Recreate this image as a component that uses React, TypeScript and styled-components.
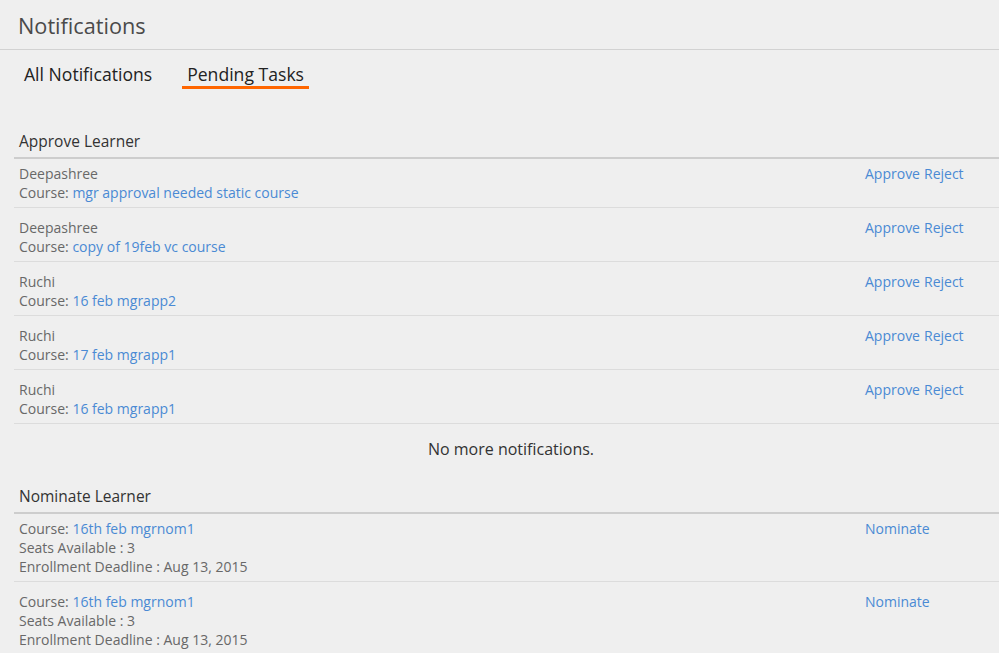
import React from "react";
import styled, { createGlobalStyle } from "styled-components";

const Global = createGlobalStyle`
  html, body { margin: 0; padding: 0; background: #efefef; }
  body { font-family: "Open Sans", "Liberation Sans", sans-serif; color: #333; }
  * { box-sizing: border-box; }
`;

const Page = styled.div`
  width: 999px;
  min-height: 653px;
  background: #efefef;
  overflow: hidden;
`;

const Header = styled.header`
  height: 50px;
  border-bottom: 1px solid #d2d2d2;
  padding: 12px 18px 0;
`;

const Title = styled.h1`
  margin: 0;
  font-size: 21.7px;
  font-weight: 400;
  line-height: 28px;
  color: #4a4a4a;
`;

const Tabs = styled.nav`
  display: flex;
  gap: 25px;
  padding: 13px 0 0 19px;
`;

const Tab = styled.div<{ $active?: boolean }>`
  padding: 0 5px;
  font-size: 17.6px;
  line-height: 23px;
  color: #222;
  border-bottom: 3px solid ${(p) => (p.$active ? "#ff6600" : "transparent")};
`;

const Content = styled.main`
  margin: 0 0 0 14px;
`;

const Section = styled.section<{ $first?: boolean }>`
  margin-top: ${(p) => (p.$first ? "42px" : "27px")};
`;

const SectionTitle = styled.h2`
  margin: 0;
  padding: 0 5px 6px;
  font-size: 15.5px;
  font-weight: 400;
  line-height: 20px;
  color: #333;
  border-bottom: 2px solid #cdcdcd;
`;

const Row = styled.div`
  display: grid;
  grid-template-columns: 1fr 129px;
  padding: 5px 5px 5px;
  border-bottom: 1px solid #dcdcdc;
  & + & {
    padding-top: 10px;
  }
`;

const Details = styled.div`
  display: flex;
  flex-direction: column;
`;

const Line = styled.div`
  font-size: 14px;
  line-height: 19px;
  color: #686868;
`;

const Link = styled.a`
  color: #4a8ad4;
  text-decoration: none;
  cursor: pointer;
`;

const Actions = styled.div`
  font-size: 14px;
  line-height: 19px;
  display: flex;
  gap: 4px;
  align-items: flex-start;
`;

const Empty = styled.div`
  text-align: center;
  padding: 15px 0 0 9px;
  font-size: 16px;
  line-height: 20px;
  color: #333;
`;

const approvals = [
  { name: "Deepashree", course: "mgr approval needed static course" },
  { name: "Deepashree", course: "copy of 19feb vc course" },
  { name: "Ruchi", course: "16 feb mgrapp2" },
  { name: "Ruchi", course: "17 feb mgrapp1" },
  { name: "Ruchi", course: "16 feb mgrapp1" },
];

const nominations = [
  { course: "16th feb mgrnom1", seats: 3, deadline: "Aug 13, 2015" },
  { course: "16th feb mgrnom1", seats: 3, deadline: "Aug 13, 2015" },
];

export default function App() {
  return (
    <Page>
      <Global />
      <Header>
        <Title>Notifications</Title>
      </Header>
      <Tabs>
        <Tab>All Notifications</Tab>
        <Tab $active>Pending Tasks</Tab>
      </Tabs>
      <Content>
        <Section $first>
          <SectionTitle>Approve Learner</SectionTitle>
          {approvals.map((a, i) => (
            <Row key={i}>
              <Details>
                <Line>{a.name}</Line>
                <Line>
                  Course: <Link>{a.course}</Link>
                </Line>
              </Details>
              <Actions>
                <Link>Approve</Link>
                <Link>Reject</Link>
              </Actions>
            </Row>
          ))}
          <Empty>No more notifications.</Empty>
        </Section>
        <Section>
          <SectionTitle>Nominate Learner</SectionTitle>
          {nominations.map((n, i) => (
            <Row key={i}>
              <Details>
                <Line>
                  Course: <Link>{n.course}</Link>
                </Line>
                <Line>Seats Available : {n.seats}</Line>
                <Line>Enrollment Deadline : {n.deadline}</Line>
              </Details>
              <Actions>
                <Link>Nominate</Link>
              </Actions>
            </Row>
          ))}
        </Section>
      </Content>
    </Page>
  );
}
